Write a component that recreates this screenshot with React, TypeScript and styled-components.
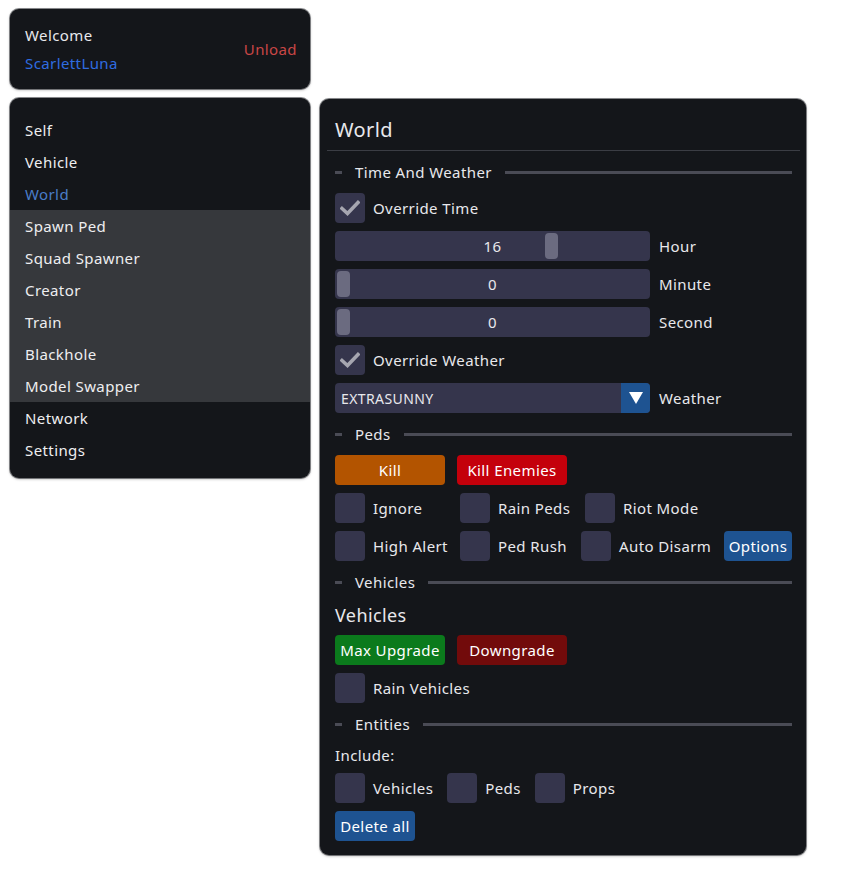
import React from "react";
import styled, { createGlobalStyle } from "styled-components";

const Global = createGlobalStyle`
  html, body { margin: 0; padding: 0; background: #ffffff; }
  body {
    font-family: "Noto Sans", "DejaVu Sans", sans-serif;
    font-size: 15px;
    letter-spacing: 0.4px;
    color: #e8e8ec;
  }
`;

const Page = styled.div`
  display: flex;
  align-items: flex-start;
  gap: 10px;
  padding: 9px 10px;
`;

const LeftCol = styled.div`
  display: flex;
  flex-direction: column;
  gap: 9px;
  width: 300px;
`;

const Card = styled.div`
  background: #14161a;
  border-radius: 9px;
  box-shadow: 0 0 0 1px rgba(60, 62, 66, 0.6), 0 1px 3px rgba(0, 0, 0, 0.35);
  box-sizing: border-box;
`;

const WelcomeCard = styled(Card)`
  height: 80px;
  display: flex;
  align-items: center;
  justify-content: space-between;
  padding: 0 13px 0 15px;
`;

const WelcomeText = styled.div`
  display: flex;
  flex-direction: column;
  gap: 6px;
  line-height: 22px;
`;

const UserName = styled.span`
  color: #2f6ce0;
`;

const Unload = styled.span`
  color: #c94646;
`;

const Menu = styled(Card)`
  padding: 16px 0 12px;
  overflow: hidden;
`;

const MenuItem = styled.div<{ $active?: boolean; $shade?: boolean }>`
  height: 32px;
  display: flex;
  align-items: center;
  padding-left: 15px;
  color: ${(p) => (p.$active ? "#4a7dc8" : "#eeeef0")};
  background: ${(p) => (p.$shade ? "#36383c" : "transparent")};
`;

const Panel = styled(Card)`
  width: 486px;
  margin-top: 90px;
  padding: 15px 14px 10px 15px;
  display: flex;
  flex-direction: column;
`;

const Title = styled.div`
  font-size: 20px;
  line-height: 32px;
  padding-bottom: 4px;
  margin-bottom: 4px;
  border-bottom: 1px solid #3b3d44;
  margin-left: -8px;
  margin-right: -8px;
  padding-left: 8px;
`;

const SectionHeader = styled.div`
  display: flex;
  align-items: center;
  height: 34px;
  gap: 13px;
  &::before {
    content: "";
    width: 7px;
    height: 3px;
    background: #4a4b55;
  }
  &::after {
    content: "";
    flex: 1;
    height: 3px;
    background: #4a4b55;
  }
`;

const Row = styled.div<{ $gap?: number }>`
  display: flex;
  align-items: center;
  height: 38px;
  gap: ${(p) => p.$gap ?? 8}px;
`;

const Box = styled.div`
  width: 30px;
  height: 30px;
  border-radius: 4px;
  background: #35354c;
  display: flex;
  align-items: center;
  justify-content: center;
  flex-shrink: 0;
`;

const CheckItem = styled.div<{ $w?: number }>`
  display: flex;
  align-items: center;
  gap: 8px;
  width: ${(p) => (p.$w ? `${p.$w}px` : "auto")};
  flex-shrink: 0;
`;

const SliderTrack = styled.div`
  position: relative;
  width: 315px;
  height: 30px;
  border-radius: 4px;
  background: #35354c;
  display: flex;
  align-items: center;
  justify-content: center;
`;

const Grab = styled.div`
  position: absolute;
  top: 2px;
  width: 13px;
  height: 26px;
  border-radius: 4px;
  background: #6b6b80;
`;

const SliderValue = styled.span`
  position: relative;
`;

const Combo = styled.div`
  width: 315px;
  height: 30px;
  border-radius: 4px;
  background: #35354c;
  display: flex;
  align-items: center;
  overflow: hidden;
  font-size: 14px;
`;

const ComboText = styled.span`
  flex: 1;
  padding-left: 6px;
`;

const ComboArrow = styled.div`
  width: 29px;
  height: 30px;
  background: #1e5391;
  display: flex;
  align-items: center;
  justify-content: center;
`;

const Button = styled.div<{ $bg: string; $w?: number }>`
  height: 30px;
  min-width: ${(p) => (p.$w ? `${p.$w}px` : "0")};
  padding: 0 5px;
  box-sizing: border-box;
  border-radius: 4px;
  background: ${(p) => p.$bg};
  display: flex;
  align-items: center;
  justify-content: center;
  color: #ffffff;
`;

const SubTitle = styled.div`
  font-size: 18px;
  height: 32px;
  display: flex;
  align-items: center;
`;

const Plain = styled.div`
  height: 28px;
  display: flex;
  align-items: center;
`;

const Check = () => (
  <svg width="20" height="16" viewBox="0 0 20 16">
    <path d="M2 8.5 L7.5 13.5 L18 2.5" fill="none" stroke="#a6a6b0" strokeWidth="3.6" strokeLinecap="square" />
  </svg>
);

const CheckBox = ({ label, checked, w }: { label: string; checked?: boolean; w?: number }) => (
  <CheckItem $w={w}>
    <Box>{checked && <Check />}</Box>
    <span>{label}</span>
  </CheckItem>
);

const Slider = ({ value, pos, label }: { value: string; pos: number; label: string }) => (
  <Row $gap={9}>
    <SliderTrack>
      <Grab style={{ left: pos }} />
      <SliderValue>{value}</SliderValue>
    </SliderTrack>
    <span>{label}</span>
  </Row>
);

const menu = ["Self", "Vehicle", "World", "Spawn Ped", "Squad Spawner", "Creator", "Train", "Blackhole", "Model Swapper", "Network", "Settings"];

export default function App() {
  return (
    <>
      <Global />
      <Page>
        <LeftCol>
          <WelcomeCard>
            <WelcomeText>
              <span>Welcome</span>
              <UserName>ScarlettLuna</UserName>
            </WelcomeText>
            <Unload>Unload</Unload>
          </WelcomeCard>
          <Menu>
            {menu.map((m, i) => (
              <MenuItem key={m} $active={m === "World"} $shade={i >= 3 && i <= 8}>
                {m}
              </MenuItem>
            ))}
          </Menu>
        </LeftCol>
        <Panel>
          <Title>World</Title>
          <SectionHeader>Time And Weather</SectionHeader>
          <Row>
            <CheckBox label="Override Time" checked />
          </Row>
          <Slider value="16" pos={210} label="Hour" />
          <Slider value="0" pos={2} label="Minute" />
          <Slider value="0" pos={2} label="Second" />
          <Row>
            <CheckBox label="Override Weather" checked />
          </Row>
          <Row $gap={9}>
            <Combo>
              <ComboText>EXTRASUNNY</ComboText>
              <ComboArrow>
                <svg width="14" height="12" viewBox="0 0 14 12">
                  <path d="M0 0 H14 L7 12 Z" fill="#ffffff" />
                </svg>
              </ComboArrow>
            </Combo>
            <span>Weather</span>
          </Row>
          <SectionHeader>Peds</SectionHeader>
          <Row $gap={12}>
            <Button $bg="#b35400" $w={110}>Kill</Button>
            <Button $bg="#c4000b" $w={110}>Kill Enemies</Button>
          </Row>
          <Row $gap={0}>
            <CheckBox label="Ignore" w={125} />
            <CheckBox label="Rain Peds" w={125} />
            <CheckBox label="Riot Mode" />
          </Row>
          <Row $gap={0}>
            <CheckBox label="High Alert" w={125} />
            <CheckBox label="Ped Rush" w={121} />
            <CheckBox label="Auto Disarm" w={143} />
            <Button $bg="#1e5391">Options</Button>
          </Row>
          <SectionHeader>Vehicles</SectionHeader>
          <SubTitle>Vehicles</SubTitle>
          <Row $gap={12}>
            <Button $bg="#0b7a1c" $w={110}>Max Upgrade</Button>
            <Button $bg="#720b0b" $w={110}>Downgrade</Button>
          </Row>
          <Row>
            <CheckBox label="Rain Vehicles" />
          </Row>
          <SectionHeader>Entities</SectionHeader>
          <Plain>Include:</Plain>
          <Row $gap={14}>
            <CheckBox label="Vehicles" />
            <CheckBox label="Peds" />
            <CheckBox label="Props" />
          </Row>
          <Row>
            <Button $bg="#1e5391" $w={80}>Delete all</Button>
          </Row>
        </Panel>
      </Page>
    </>
  );
}
